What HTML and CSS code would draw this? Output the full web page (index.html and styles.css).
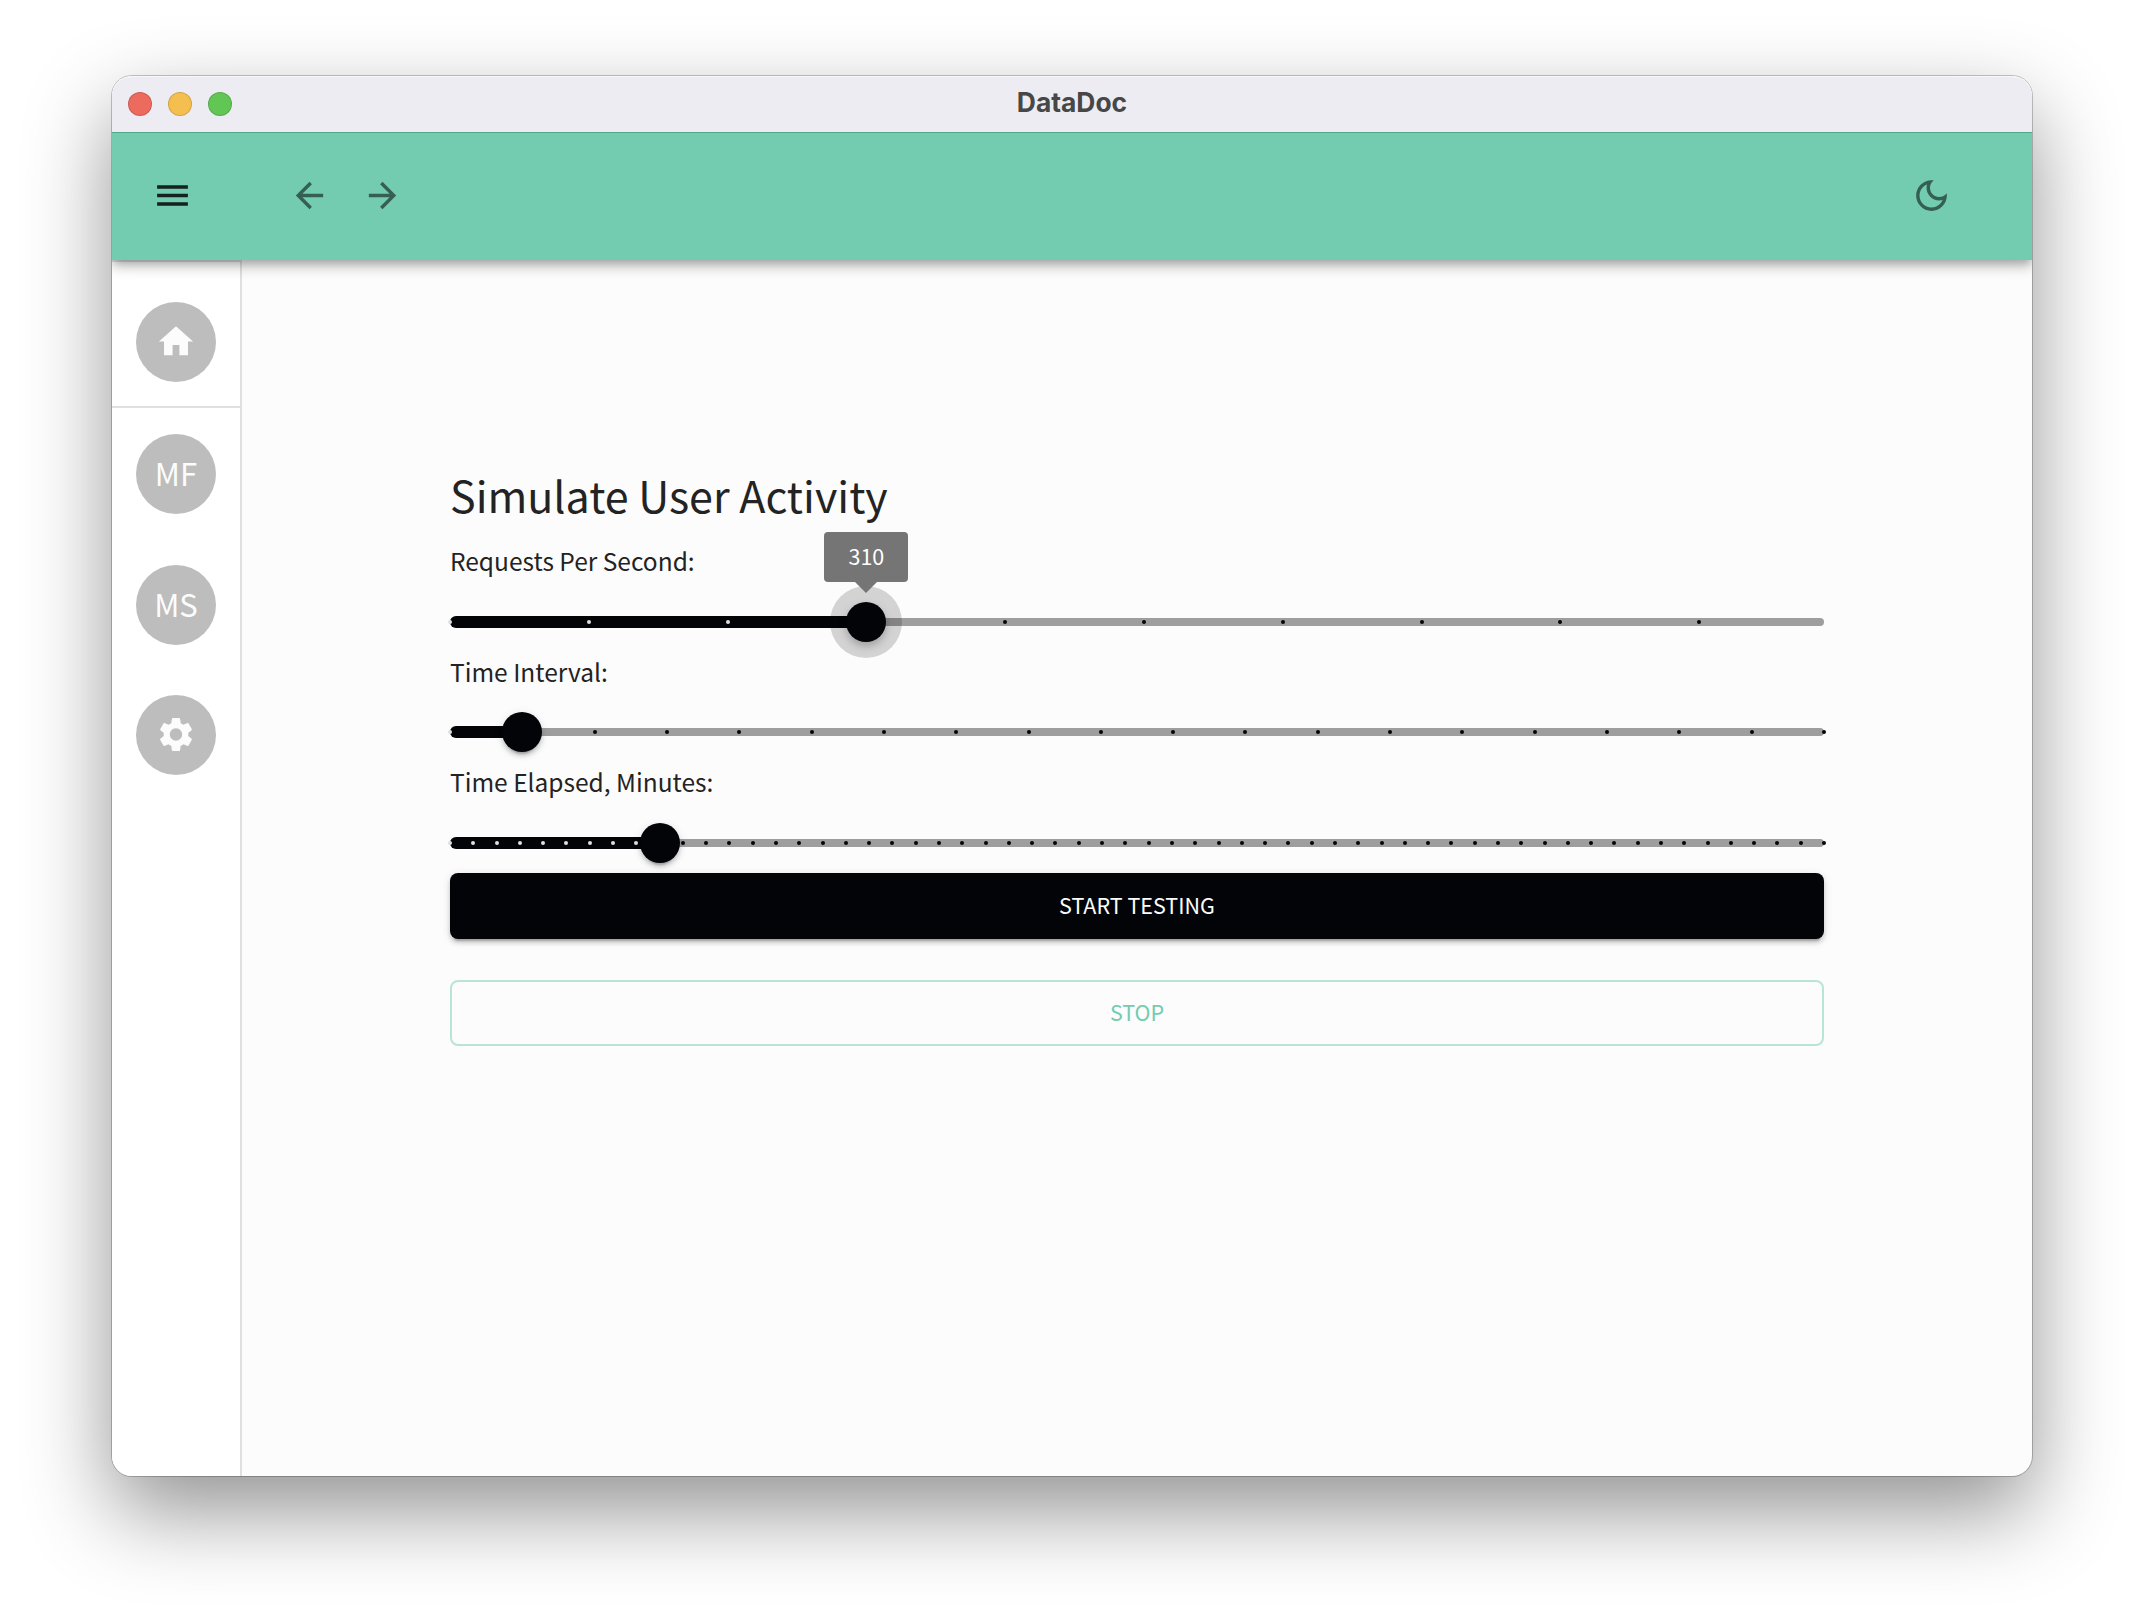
FILE: index.html
```html
<!DOCTYPE html>
<html lang="en">
<head>
<meta charset="utf-8">
<title>DataDoc</title>
<link rel="stylesheet" href="styles.css">
</head>
<body>
<div class="window">
  <div class="titlebar">
    <div class="lights"><i class="light red"></i><i class="light yellow"></i><i class="light green"></i></div>
    <span class="titlebar-text">DataDoc</span>
  </div>
  <header class="appbar">
    <svg class="icon menu" viewBox="0 0 24 24"><path d="M3 18h18v-2H3v2zm0-5h18v-2H3v2zm0-7v2h18V6H3z"/></svg>
    <svg class="icon back" viewBox="0 0 24 24"><path d="M20 11H7.83l5.59-5.59L12 4l-8 8 8 8 1.41-1.41L7.83 13H20v-2z"/></svg>
    <svg class="icon forward" viewBox="0 0 24 24"><path d="m12 4-1.41 1.41L16.17 11H4v2h12.17l-5.58 5.59L12 20l8-8z"/></svg>
    <svg class="icon moon" viewBox="0 0 24 24"><path d="M9.37 5.51c-.18.64-.27 1.31-.27 1.99 0 4.08 3.32 7.4 7.4 7.4.68 0 1.35-.09 1.99-.27C17.45 17.19 14.93 19 12 19c-3.86 0-7-3.14-7-7 0-2.93 1.81-5.45 4.37-6.49zM12 3c-4.97 0-9 4.03-9 9s4.03 9 9 9 9-4.03 9-9c0-.46-.04-.92-.1-1.36-.98 1.37-2.58 2.26-4.4 2.26-2.98 0-5.4-2.42-5.4-5.4 0-1.81.89-3.42 2.26-4.4-.44-.06-.9-.1-1.36-.1z"/></svg>
  </header>
  <div class="body">
    <nav class="sidebar">
      <div class="home"><div class="avatar"><svg class="icon" viewBox="0 0 24 24"><path d="M10 20v-6h4v6h5v-8h3L12 3 2 12h3v8z"/></svg></div></div>
      <div class="avatar mf"><span>MF</span></div>
      <div class="avatar ms"><span>MS</span></div>
      <div class="avatar settings"><svg class="icon" viewBox="0 0 24 24"><path d="M19.14 12.94c.04-.3.06-.61.06-.94 0-.32-.02-.64-.07-.94l2.03-1.58c.18-.14.23-.41.12-.61l-1.92-3.32c-.12-.22-.37-.29-.59-.22l-2.39.96c-.5-.38-1.03-.7-1.62-.94l-.36-2.54c-.04-.24-.24-.41-.48-.41h-3.84c-.24 0-.43.17-.47.41l-.36 2.54c-.59.24-1.13.57-1.62.94l-2.39-.96c-.22-.08-.47 0-.59.22L2.74 8.87c-.12.21-.08.47.12.61l2.03 1.58c-.05.3-.09.63-.09.94s.02.64.07.94l-2.03 1.58c-.18.14-.23.41-.12.61l1.92 3.32c.12.22.37.29.59.22l2.39-.96c.5.38 1.03.7 1.62.94l.36 2.54c.05.24.24.41.48.41h3.84c.24 0 .44-.17.47-.41l.36-2.54c.59-.24 1.13-.56 1.62-.94l2.39.96c.22.08.47 0 .59-.22l1.92-3.32c.12-.22.07-.47-.12-.61l-2.01-1.58zM12 15.6c-1.98 0-3.6-1.62-3.6-3.6s1.62-3.6 3.6-3.6 3.6 1.62 3.6 3.6-1.62 3.6-3.6 3.6z"/></svg></div>
    </nav>
    <main class="content">
      <h1 class="heading">Simulate User Activity</h1>
      <section class="field requests"><label class="label">Requests Per Second:</label>
        <div class="slider" data-steps="9.9" data-value="3"><div class="rail"></div><div class="track"></div><div class="thumb active"><span class="tip">310</span></div></div></section>
      <section class="field interval"><label class="label">Time Interval:</label>
        <div class="slider" data-steps="19" data-value="1"><div class="rail"></div><div class="track"></div><div class="thumb"></div></div></section>
      <section class="field elapsed"><label class="label">Time Elapsed, Minutes:</label>
        <div class="slider" data-steps="59" data-value="9"><div class="rail"></div><div class="track"></div><div class="thumb"></div></div></section>
      <button class="button start"><span>START TESTING</span></button>
      <button class="button stop"><span>STOP</span></button>
    </main>
  </div>
</div>
<script src="sliders.js"></script>
</body>
</html>
```
FILE: sliders.js
```js
// Places the marks, the filled track and the thumb of each slider.
document.querySelectorAll('.slider').forEach(function (slider) {
  var steps = Number(slider.dataset.steps);
  var value = Number(slider.dataset.value);
  var thumb = slider.querySelector('.thumb');
  for (var i = 0; i <= steps; i++) {
    var mark = document.createElement('i');
    mark.className = i <= value ? 'mark filled' : 'mark';
    mark.style.left = (i / steps * 100) + '%';
    slider.insertBefore(mark, thumb);
  }
  slider.querySelector('.track').style.width = (value / steps * 100) + '%';
  thumb.style.left = (value / steps * 100) + '%';
});
```
FILE: styles.css
```css
* { box-sizing: border-box; }
body {
  margin: 0;
  width: 2144px;
  height: 1624px;
  padding: 76px 112px 148px;
  overflow: hidden;
  background: #fff;
  font-family: "Noto Sans CJK SC", "Noto Sans", sans-serif;
  color: #232323;
}
.window {
  height: 1400px;
  display: flex;
  flex-direction: column;
  border-radius: 20px;
  background: #fcfcfc;
  box-shadow: 0 0 0 1px rgba(0,0,0,.22), 0 35px 86px rgba(0,0,0,.43);
}
.titlebar {
  flex: none;
  height: 56px;
  display: grid;
  grid-template-columns: 1fr auto 1fr;
  align-items: center;
  padding: 0 16px;
  border-radius: 20px 20px 0 0;
  background: #edecf2;
  box-shadow: inset 0 1px 0 #f8f8fa;
}
.lights { display: flex; gap: 16px; }
.light { width: 24px; height: 24px; border-radius: 50%; border: 1px solid rgba(0,0,0,.14); }
.red { background: #ed6a5f; }
.yellow { background: #f5bf4f; }
.green { background: #62c654; }
.titlebar-text { font: 700 26.4px/52px Inter, sans-serif; color: #474747; margin-top: -4px; }
.appbar {
  flex: none;
  position: relative;
  z-index: 1;
  height: 128px;
  display: flex;
  align-items: center;
  padding: 0 80px 1px 40px;
  background: #73ccb0;
  box-shadow: inset 0 1px 0 #4ea78b, 0 4px 8px -2px rgba(0,0,0,.2), 0 8px 10px rgba(0,0,0,.14), 0 2px 20px rgba(0,0,0,.12);
  clip-path: inset(0 0 -40px 0);
}
.icon { width: 41px; height: 41px; fill: currentColor; flex: none; display: block; }
.menu { color: #14211d; }
.back { margin-left: 96px; }
.forward { margin-left: 32px; }
.moon { margin-left: auto; }
.back, .forward, .moon { color: #355f51; }
.body { flex: 1; display: flex; min-height: 0; }
.sidebar {
  width: 130px;
  border-right: 2px solid #e0e0e0;
  border-top: 2px solid #e0e0e0;
  border-radius: 0 0 0 20px;
  background: #fff;
  display: flex;
  flex-direction: column;
}
.home { height: 146px; padding-top: 40px; border-bottom: 2px solid #e0e0e0; }
.avatar {
  width: 80px;
  height: 80px;
  margin-left: 24px;
  padding: 0 0 1px 0;
  display: flex;
  align-items: center;
  justify-content: center;
  border-radius: 50%;
  background: #bdbdbd;
  color: #fcfcfc;
  font-size: 31px;
}
.avatar .icon { width: 42px; }
.avatar span { padding: 0 0 2px; }
.mf { margin-top: 26px; }
.ms { margin-top: 51px; }
.settings { margin-top: 50px; }
.content { flex: 1; padding: 201px 208px 0; display: flex; flex-direction: column; }
.heading { margin: 0; height: 73px; font-size: 43px; line-height: 66px; font-weight: 400; white-space: nowrap; }
.field { height: 110px; }
.interval { height: 111px; }
.elapsed { height: 112px; }
.label { display: block; height: 54px; font-size: 24.5px; line-height: 54px; }
.slider { position: relative; height: 12px; margin-top: 28px; }
.interval .label { position: relative; top: 1px; }
.rail { position: absolute; inset: 2px 0; border-radius: 6px; background: #9e9e9e; }
.track { position: absolute; left: 0; top: 0; height: 12px; border-radius: 6px; background: #030408; }
.mark { position: absolute; top: 4px; width: 4px; height: 4px; margin-left: -2px; border-radius: 2px; background: #030408; }
.mark.filled { background: #e0e0e0; }
.thumb {
  position: absolute;
  top: -14px;
  width: 40px;
  height: 40px;
  margin-left: -20px;
  border-radius: 50%;
  background: #030408;
  box-shadow: 0 6px 2px -4px rgba(0,0,0,.2), 0 4px 4px rgba(0,0,0,.14), 0 2px 10px rgba(0,0,0,.12);
}
.thumb.active { box-shadow: 0 0 0 16px rgba(2,3,7,.16), 0 4px 8px rgba(0,0,0,.25); }
.tip {
  position: absolute;
  left: -22px;
  top: -70px;
  width: 84px;
  height: 50px;
  border-radius: 4px;
  background: #757575;
  color: #fff;
  font-size: 21.5px;
  line-height: 48px;
  text-align: center;
}
.tip::after {
  content: "";
  position: absolute;
  left: 31px;
  top: 50px;
  border: 11px solid transparent;
  border-top-color: #757575;
  border-bottom: 0;
}
.button {
  flex: none;
  height: 66px;
  padding: 0 0 3px;
  border-radius: 8px;
  font-family: inherit;
  font-size: 21.5px;
}
.start {
  margin-top: 6px;
  border: 0;
  background: #030408;
  color: #fcfcfc;
  box-shadow: 0 6px 2px -4px rgba(0,0,0,.2), 0 4px 4px rgba(0,0,0,.14), 0 2px 10px rgba(0,0,0,.12);
}
.stop { margin-top: 41px; border: 2px solid #b8e5d7; background: transparent; color: #73ccb0; }
```
